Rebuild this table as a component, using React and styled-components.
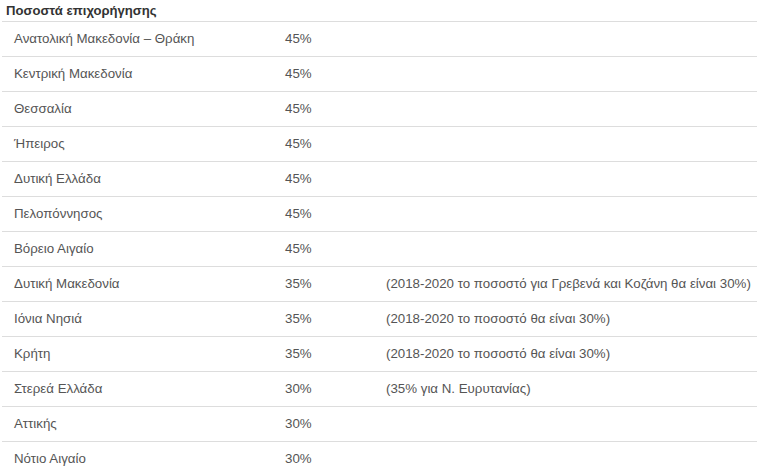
import React from 'react'
import styled, { createGlobalStyle } from 'styled-components'

const Global = createGlobalStyle`
  body {
    margin: 0;
    background: #fff;
    font-family: "Liberation Sans", Arial, sans-serif;
  }
`

const Wrapper = styled.div`
  padding: 0 1px 0 2px;
`

const Title = styled.h4`
  margin: 0;
  height: 21px;
  line-height: 21px;
  padding-left: 4px;
  font-size: 13.1px;
  font-weight: bold;
  color: #333;
`

const Table = styled.table`
  width: 100%;
  table-layout: fixed;
  border-collapse: collapse;
  font-size: 13.3px;
  color: #555;
`

const Row = styled.tr`
  height: 35px;
  border-top: 1px solid #ddd;
`

const Cell = styled.td`
  padding: 0 0 1px ${(p) => p.$indent || 0}px;
  vertical-align: middle;
  white-space: nowrap;
`

const rows = [
  ['Ανατολική Μακεδονία – Θράκη', '45%', ''],
  ['Κεντρική Μακεδονία', '45%', ''],
  ['Θεσσαλία', '45%', ''],
  ['Ήπειρος', '45%', ''],
  ['Δυτική Ελλάδα', '45%', ''],
  ['Πελοπόννησος', '45%', ''],
  ['Βόρειο Αιγαίο', '45%', ''],
  ['Δυτική Μακεδονία', '35%', '(2018-2020 το ποσοστό για Γρεβενά και Κοζάνη θα είναι 30%)'],
  ['Ιόνια Νησιά', '35%', '(2018-2020 το ποσοστό θα είναι 30%)'],
  ['Κρήτη', '35%', '(2018-2020 το ποσοστό θα είναι 30%)'],
  ['Στερεά Ελλάδα', '30%', '(35% για Ν. Ευρυτανίας)'],
  ['Αττικής', '30%', ''],
  ['Νότιο Αιγαίο', '30%', ''],
]

export default function App() {
  return (
    <Wrapper>
      <Global />
      <Title>Ποσοστά επιχορήγησης</Title>
      <Table>
        <colgroup>
          <col style={{ width: 283 }} />
          <col style={{ width: 101 }} />
          <col />
        </colgroup>
        <tbody>
          {rows.map(([region, rate, note]) => (
            <Row key={region}>
              <Cell $indent={12}>{region}</Cell>
              <Cell>{rate}</Cell>
              <Cell>{note}</Cell>
            </Row>
          ))}
        </tbody>
      </Table>
    </Wrapper>
  )
}
